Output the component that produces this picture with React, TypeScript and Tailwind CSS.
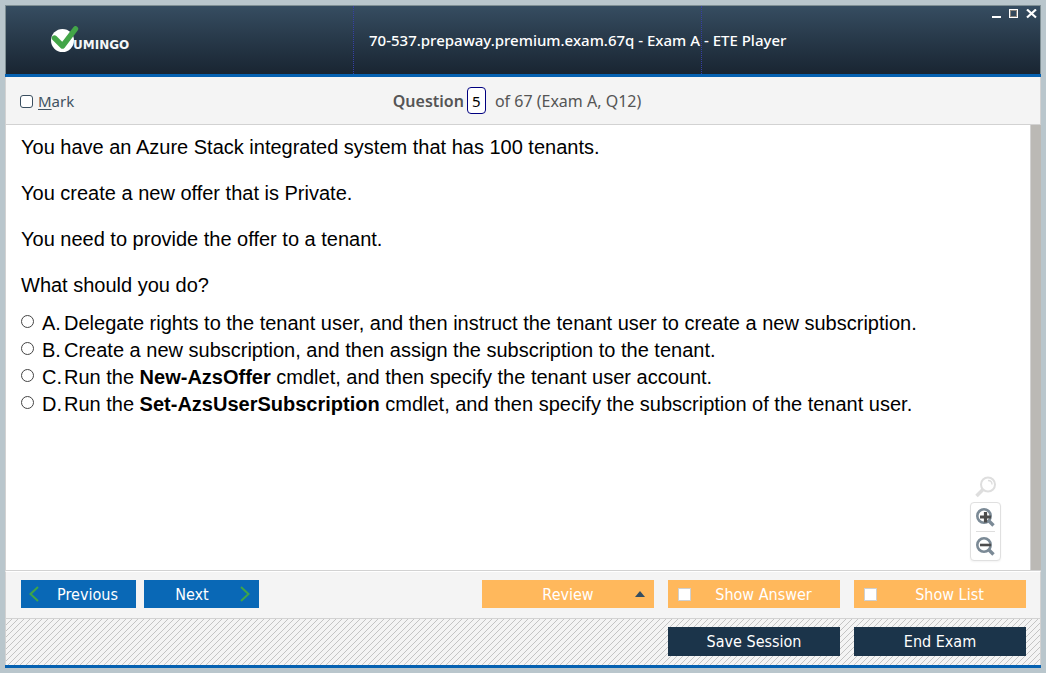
import type { ReactNode } from "react";

const paragraphs = [
  "You have an Azure Stack integrated system that has 100 tenants.",
  "You create a new offer that is Private.",
  "You need to provide the offer to a tenant.",
  "What should you do?",
];

const answers: { letter: string; text: ReactNode }[] = [
  {
    letter: "A",
    text: "Delegate rights to the tenant user, and then instruct the tenant user to create a new subscription.",
  },
  {
    letter: "B",
    text: "Create a new subscription, and then assign the subscription to the tenant.",
  },
  {
    letter: "C",
    text: (
      <>
        Run the <b>New-AzsOffer</b> cmdlet, and then specify the tenant user account.
      </>
    ),
  },
  {
    letter: "D",
    text: (
      <>
        Run the <b>Set-AzsUserSubscription</b> cmdlet, and then specify the subscription of the tenant user.
      </>
    ),
  },
];

function Logo() {
  return (
    <svg width="82" height="28" viewBox="0 0 82 28" role="img" aria-label="Vumingo">
      <circle cx="12.5" cy="14.5" r="11.5" fill="#fff" />
      <path d="M4.5 12L12.5 20L25.5 2.8" fill="none" stroke="#43a548" strokeWidth="5.4" strokeLinecap="round" strokeLinejoin="round" />
      <text x="23" y="23" fill="#f4f6f8" fontSize="12" fontWeight="700" fontFamily="'DejaVu Sans', sans-serif">
        UMINGO
      </text>
    </svg>
  );
}

function Header() {
  return (
    <header className="border-b-3 border-[#0561b1]">
      <div className="grid h-[69px] grid-cols-[348px_348px_1fr] border border-b-0 border-[#7f8f94] bg-linear-to-b from-[#364d61] to-[#192532] text-white">
        <div className="flex items-center border-r border-dotted border-[#363fa5] pl-11">
          <Logo />
        </div>
        <div className="flex items-center border-r border-dotted border-[#363fa5]">
          <h1 className="pl-[15px] font-['Noto_Sans',sans-serif] text-[15px] leading-5 font-medium whitespace-nowrap">
            70-537.prepaway.premium.exam.67q - Exam A - ETE Player
          </h1>
        </div>
        <div className="flex items-start justify-end gap-2 pt-[3px] pr-[3px]">
          <button type="button" aria-label="Minimize">
            <svg width="9" height="10" viewBox="0 0 9 10">
              <path d="M0 7H9V9H0Z" fill="#fff" />
            </svg>
          </button>
          <button type="button" aria-label="Maximize">
            <svg width="9" height="10" viewBox="0 0 9 10">
              <rect x=".5" y=".5" width="8" height="8" fill="none" stroke="#fff" />
              <rect x="1.5" y="1.5" width="6" height="6" fill="none" stroke="#8b857d" />
            </svg>
          </button>
          <button type="button" aria-label="Close">
            <svg width="11" height="10" viewBox="0 0 11 10">
              <path d="M1 .5L10 8.5M10 .5L1 8.5" stroke="#fff" strokeWidth="2.2" />
            </svg>
          </button>
        </div>
      </div>
    </header>
  );
}

function ZoomTools() {
  return (
    <div className="absolute right-10 bottom-[9px] flex flex-col items-center gap-1">
      <svg width="22" height="22" viewBox="0 0 22 22" fill="none" stroke="#dedede">
        <circle cx="13" cy="8.5" r="7" strokeWidth="2" />
        <path d="M8 13.5L1.5 20" strokeWidth="3.6" />
        <path d="M13 4.5Q17 4.5 17 8.5" strokeWidth="1.4" />
      </svg>
      <div className="flex w-[31px] flex-col items-center rounded-sm border border-[#e0e0e0] bg-white shadow-xs">
        <button type="button" aria-label="Zoom in" className="flex h-7 items-center justify-center">
          <svg width="19" height="19" viewBox="0 0 19 19" fill="none">
            <circle cx="8" cy="8" r="6.7" stroke="#7b8a96" strokeWidth="2.6" />
            <path d="M12.5 12.5L17.5 17.5" stroke="#7b8a96" strokeWidth="3.4" />
            <path d="M4 9H15M9.5 4V14.5" stroke="#4c4c4c" strokeWidth="3.2" />
          </svg>
        </button>
        <div className="h-px w-[19px] bg-[#dedede]" />
        <button type="button" aria-label="Zoom out" className="flex h-7 items-center justify-center">
          <svg width="19" height="19" viewBox="0 0 19 19" fill="none">
            <circle cx="8" cy="8" r="6.7" stroke="#7b8a96" strokeWidth="2.6" />
            <path d="M12.5 12.5L17.5 17.5" stroke="#7b8a96" strokeWidth="3.4" />
            <path d="M4 8H15" stroke="#4c4c4c" strokeWidth="2.6" />
          </svg>
        </button>
      </div>
    </div>
  );
}

function ToggleButton({ id, label }: { id: string; label: string }) {
  return (
    <label htmlFor={id} className="flex h-7 w-43 items-center bg-[#ffb85c] pr-1 pl-[10px] text-white">
      <input id={id} type="checkbox" className="size-[13px] shrink-0 appearance-none border border-[#cfcfcf] bg-white" />
      <span className="flex-1 pt-0.5 text-center">{label}</span>
    </label>
  );
}

export default function App() {
  return (
    <div className="flex min-h-screen flex-col bg-[#b9c6cc] p-[5px]">
      <div className="flex flex-1 flex-col">
        <Header />

        <div className="grid h-12 grid-cols-[1fr_auto_1fr] items-center border-x border-b border-[#d2d2d2] bg-[#f4f4f4] px-[14px] font-['Noto_Sans',sans-serif] text-[16px] text-[#555]">
          <label htmlFor="mark" className="flex items-center gap-[5px] pt-0.5 text-[15px] text-[#3f5261]">
            <input id="mark" type="checkbox" className="size-[13px] appearance-none rounded-[3px] border border-[#3a4f60] bg-white" />
            <span>
              <u className="underline-offset-2">M</u>ark
            </span>
          </label>
          <div className="flex items-center pr-3">
            <label htmlFor="question" className="font-semibold">
              Question
            </label>
            <input
              id="question"
              type="text"
              defaultValue="5"
              className="mr-[9px] ml-[3px] h-[27px] w-[19px] rounded-sm border border-[#000080] bg-white text-center text-[15px] text-black"
            />
            <span>of 67 (Exam A, Q12)</span>
          </div>
        </div>

        <main className="relative flex flex-1 border-b border-l border-[#d2d2d2] bg-white font-['Liberation_Sans',sans-serif] text-[20px] leading-[23px] text-black">
          <div className="flex-1 px-[15px] pt-[11px]">
            <div className="flex flex-col gap-[23px]">
              {paragraphs.map((p) => (
                <p key={p}>{p}</p>
              ))}
            </div>
            <fieldset className="mt-[13px]">
              {answers.map(({ letter, text }) => (
                <label key={letter} htmlFor={`answer-${letter}`} className="flex h-[27px] items-center">
                  <input
                    id={`answer-${letter}`}
                    type="radio"
                    name="answer"
                    className="mr-2 mb-1 size-[13px] shrink-0 appearance-none rounded-full border border-[#444] bg-white"
                  />
                  <span className="w-[22px]">{letter}.</span>
                  <span>{text}</span>
                </label>
              ))}
            </fieldset>
          </div>
          <div className="w-[11px] border-l border-[#d2d2d2] bg-[#bbb9b5]" />
          <ZoomTools />
        </main>

        <footer className="font-['DejaVu_Sans_Condensed','DejaVu_Sans',sans-serif] text-[16px] leading-5">
          <div className="flex h-12 items-center justify-between border border-[#d2d2d2] border-t-white bg-[#f4f4f4] pr-[14px] pb-0.5 pl-[15px]">
            <div className="flex gap-2">
              <button type="button" className="flex h-7 w-[115px] items-center bg-[#0968b6] pl-2 text-white">
                <svg width="10" height="16" viewBox="0 0 10 16" fill="none" stroke="#3fa548" strokeWidth="2">
                  <path d="M9 1L1.5 8L9 15" />
                </svg>
                <span className="flex-1 pt-0.5">Previous</span>
              </button>
              <button type="button" className="flex h-7 w-[115px] items-center bg-[#0968b6] pr-[9px] text-white">
                <span className="flex-1 pt-0.5">Next</span>
                <svg width="10" height="16" viewBox="0 0 10 16" fill="none" stroke="#3fa548" strokeWidth="2">
                  <path d="M1 1L8.5 8L1 15" />
                </svg>
              </button>
            </div>
            <div className="flex gap-[14px]">
              <button type="button" className="flex h-7 w-43 items-center bg-[#ffb85c] px-[9px] text-white">
                <span className="flex-1 pt-0.5 pl-[10px]">Review</span>
                <svg width="10" height="6" viewBox="0 0 10 6">
                  <path d="M0 6L5 0L10 6Z" fill="#334d61" />
                </svg>
              </button>
              <ToggleButton id="show-answer" label="Show Answer" />
              <ToggleButton id="show-list" label="Show List" />
            </div>
          </div>
          <div className="flex h-[46px] items-center justify-end gap-[14px] border-x border-[#d2d2d2] bg-[#f4f4f4] bg-[linear-gradient(135deg,transparent_46%,#c4c4c4_46%,#c4c4c4_54%,transparent_54%)] bg-size-[6px_6px] pr-[14px] pb-0.5">
            <button type="button" className="h-[29px] w-43 bg-[#1b344a] pt-0.5 text-white">
              Save Session
            </button>
            <button type="button" className="h-[29px] w-43 bg-[#1b344a] pt-0.5 text-white">
              End Exam
            </button>
          </div>
          <div className="h-[3px] bg-[#0561b1]" />
        </footer>
      </div>
    </div>
  );
}
